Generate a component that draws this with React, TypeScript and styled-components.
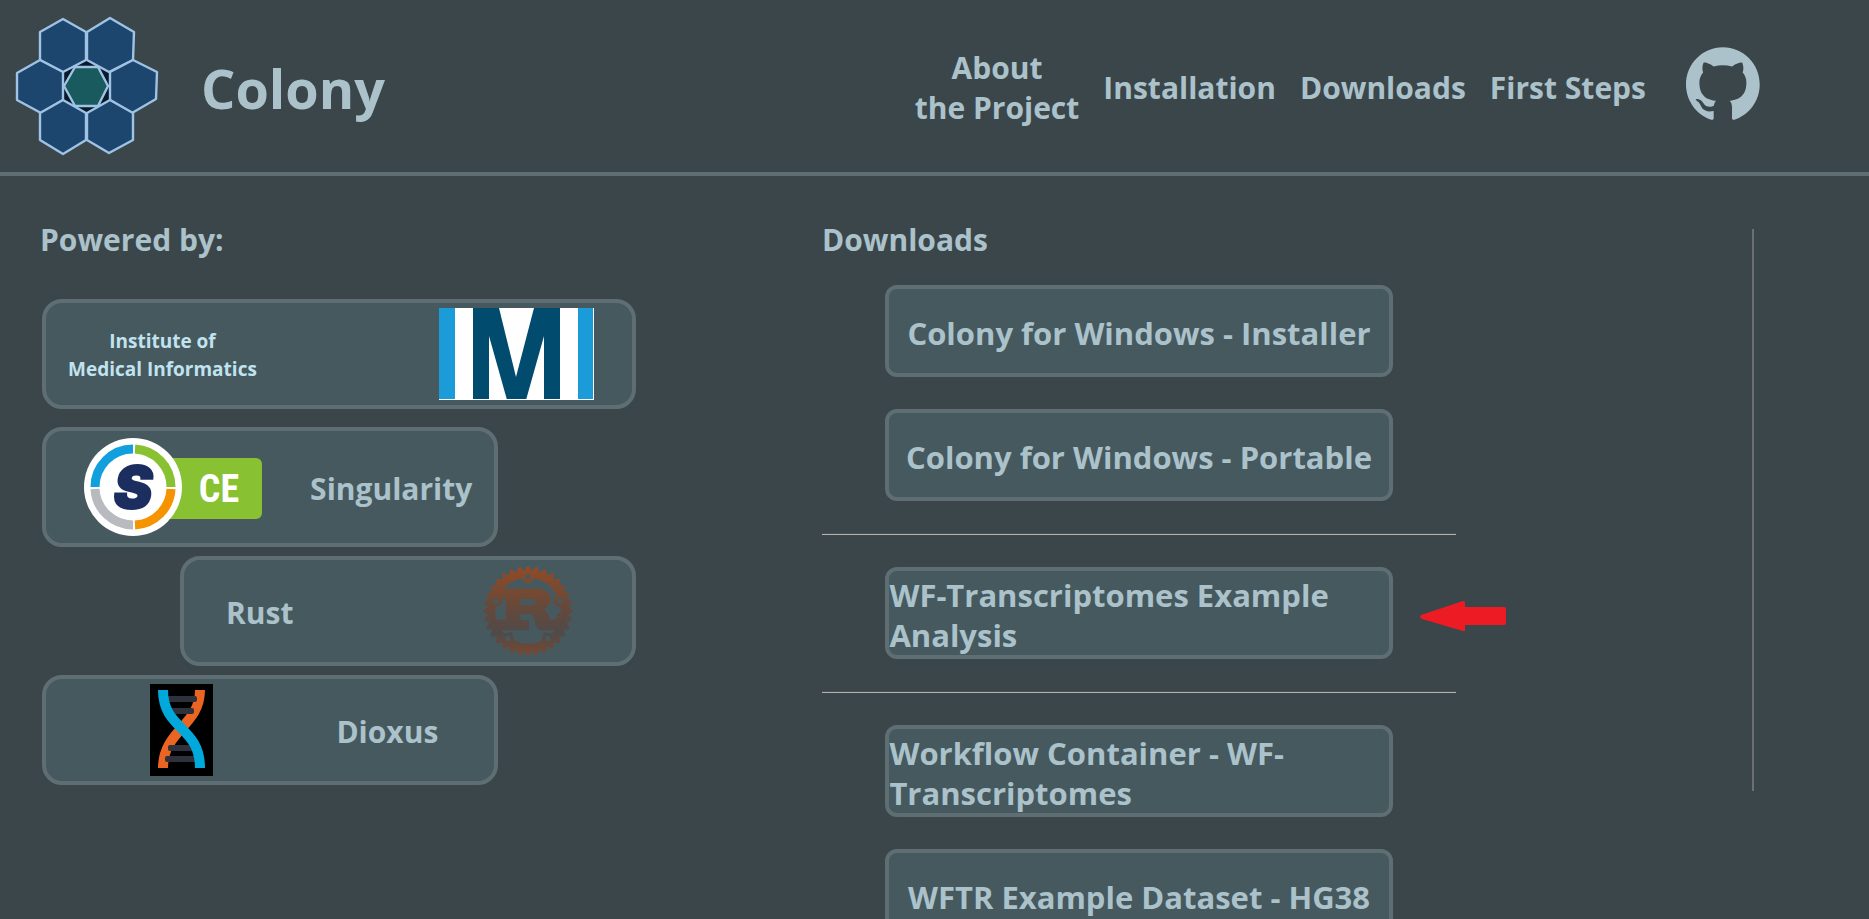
import React from "react";
import styled, { createGlobalStyle } from "styled-components";
import { SiRust } from "react-icons/si";

const GlobalStyle = createGlobalStyle`
  *, *::before, *::after { box-sizing: border-box; }
  html, body, #root { height: 100%; }
  body {
    margin: 0;
    overflow: hidden;
    background: #3b464a;
    color: #abc2cb;
    font-family: "Segoe UI", "Open Sans", "Noto Sans", sans-serif;
    font-size: 30px;
    font-weight: 700;
    line-height: 40px;
  }
`;

const Page = styled.div`
  display: flex;
  flex-direction: column;
  height: 100%;
  overflow: hidden;
`;

const Header = styled.header`
  display: flex;
  flex: none;
  align-items: center;
  padding: 14px 109px 16px 12px;
  border-bottom: 4px solid #5e6e73;
`;

const Brand = styled.h1`
  margin: 0 auto 0 39px;
  padding-top: 6px;
  font-size: 54px;
  line-height: 72px;
`;

const Nav = styled.nav`
  display: flex;
  align-items: center;
  gap: 24px;
  padding-top: 6px;
  text-align: center;
`;

const NavLink = styled.a`
  color: inherit;
  text-decoration: none;
`;

const GithubLink = styled.a`
  display: block;
  margin: 0 0 10px 16px;
  color: inherit;

  svg { display: block; }
`;

const Main = styled.main`
  display: grid;
  grid-template-columns: 822fr 634fr 298fr 115fr;
  flex: 1;
  min-height: 0;
  padding-top: 44px;
`;

const Sponsors = styled.section`
  padding-left: 40px;
`;

const Heading = styled.h2`
  margin: 0;
  font-size: inherit;
  line-height: 40px;
`;

const SponsorList = styled.div`
  display: flex;
  flex-direction: column;
  gap: 9px;
  width: 76%;
  margin: 39px 0 0 2px;
`;

type SponsorProps = { $side?: "start" | "end"; $tall?: boolean; $inset: string };

const SponsorCard = styled.a<SponsorProps>`
  display: flex;
  align-items: center;
  justify-content: space-between;
  align-self: ${(p) => (p.$side ? `flex-${p.$side}` : "stretch")};
  width: ${(p) => (p.$side ? "calc(100% - 138px)" : "auto")};
  height: ${(p) => (p.$tall ? 120 : 110)}px;
  margin-bottom: ${(p) => (p.$side ? 0 : 9)}px;
  padding: ${(p) => p.$inset};
  border: 4px solid #5e6e73;
  border-radius: 20px;
  background: #46595e;
  color: inherit;
  text-decoration: none;

  svg { display: block; flex: none; }
`;

const SponsorName = styled.span`
  padding-top: 4px;
`;

const Institute = styled.span`
  padding-top: 2px;
  color: #c0e3ef;
  font-size: 19px;
  line-height: 28px;
  text-align: center;
`;

const DownloadList = styled.div`
  display: flex;
  flex-direction: column;
  align-items: center;
  gap: 32px;
  margin-top: 25px;
`;

const DownloadRow = styled.div`
  position: relative;
  width: 80%;
`;

const DownloadButton = styled.button`
  display: flex;
  align-items: center;
  justify-content: center;
  width: 100%;
  height: 92px;
  padding: 4px 0 0;
  border: 4px solid #5e6e73;
  border-radius: 12px;
  background: #46595e;
  color: inherit;
  font: inherit;
  font-size: 31px;
  text-align: left;
`;

const Divider = styled.hr`
  width: 100%;
  height: 2px;
  margin: 0;
  border: 0;
  border-top: 1px solid #4a4e4f;
  border-bottom: 1px solid #b8b2ae;
`;

const Pointer = styled.svg`
  position: absolute;
  top: 34px;
  left: calc(100% + 27px);
`;

const SideRule = styled.div`
  height: 562px;
  margin-top: 9px;
  border-right: 2px solid #6c7073;
`;

const ColonyLogo = () => (
  <svg width="150" height="142" viewBox="12 14 150 142" role="img" aria-label="Colony logo">
    <path d="M63 71 86 59 110 71V101L86 113 63 101Z" fill="#0a1a2b" />
    <g fill="#1d466f" stroke="#9fc3e4" strokeWidth="2.4" strokeLinejoin="round">
      <path d="M63 19 86 32V60L63 72 40 60V32Z" />
      <path d="M110 18 134 32 133 60 109 72 87 60V32Z" />
      <path d="M40 60 63 72V100L41 113 17 100V73Z" />
      <path d="M133 60 157 72 156 99 132 113 110 100V72Z" />
      <path d="M63 100 86 113V140L63 154 40 140V113Z" />
      <path d="M110 100 133 113V140L109 153 87 140V113Z" />
      <path d="M75 67H98L108 86 98 106H75L64 86Z" fill="#185a5d" />
    </g>
  </svg>
);

const GithubMark = () => (
  <svg width="74" height="73" viewBox="0 0 98 96" fill="currentColor" aria-hidden="true">
    <path d="M48.854 0C21.839 0 0 22 0 49.217c0 21.756 13.993 40.172 33.405 46.69 2.427.49 3.316-1.059 3.316-2.362 0-1.141-.08-5.052-.08-9.127-13.59 2.934-16.42-5.867-16.42-5.867-2.184-5.704-5.42-7.17-5.42-7.17-4.448-3.015.324-3.015.324-3.015 4.934.326 7.523 5.052 7.523 5.052 4.367 7.496 11.404 5.378 14.235 4.074.404-3.178 1.699-5.378 3.074-6.6-10.839-1.141-22.243-5.378-22.243-24.283 0-5.378 1.94-9.778 5.014-13.2-.485-1.222-2.184-6.275.486-13.038 0 0 4.125-1.304 13.426 5.052a46.97 46.97 0 0 1 12.214-1.63c4.125 0 8.33.571 12.213 1.63 9.302-6.356 13.427-5.052 13.427-5.052 2.67 6.763.97 11.816.485 13.038 3.155 3.422 5.015 7.822 5.015 13.2 0 18.905-11.404 23.06-22.324 24.283 1.78 1.548 3.316 4.481 3.316 9.126 0 6.6-.08 11.897-.08 13.526 0 1.304.89 2.853 3.316 2.364 19.412-6.52 33.405-24.935 33.405-46.691C97.707 22 75.788 0 48.854 0z" />
  </svg>
);

const InstituteLogo = () => (
  <svg width="155" height="92" viewBox="0 0 155 92" role="img" aria-label="Institute logo">
    <rect width="155" height="92" fill="#fff" />
    <rect width="16" height="91" fill="#1b9bd8" />
    <rect x="139" width="15" height="91" fill="#1b9bd8" />
    <rect x="34" width="87" height="91" fill="#004b6e" />
    <g fill="#fff">
      <path d="M60 0H95L77 69Z" />
      <path d="M50 28 68 92H50Z" />
      <path d="M105 28V92H87Z" />
    </g>
  </svg>
);

const SingularityLogo = () => (
  <svg width="178" height="100" viewBox="0 0 178 100" role="img" aria-label="SingularityCE logo">
    <rect x="70" y="21" width="108" height="61" rx="6" fill="#88c232" />
    <circle cx="49" cy="50" r="49" fill="#fff" />
    <g fill="none" strokeWidth="9">
      <path d="M11 50A38 38 0 0 1 49 12" stroke="#119fdd" />
      <path d="M51 12A38 38 0 0 1 87 50" stroke="#88c232" />
      <path d="M87 52A38 38 0 0 1 51 88" stroke="#f59300" />
      <path d="M49 88A38 38 0 0 1 11 52" stroke="#b9babf" />
    </g>
    <text x="49" y="71" textAnchor="middle" fontFamily="Inter, 'Open Sans'" fontStyle="italic" fontWeight="900" fontSize="58" fill="#1b2e5f" stroke="#1b2e5f" strokeWidth="2">S</text>
    <text x="135" y="65" textAnchor="middle" fontFamily="'Liberation Sans Narrow', 'Roboto Condensed', 'Open Sans Condensed', Roboto" fontWeight="700" fontSize="38" fill="#fff">CE</text>
  </svg>
);

const RustLogo = () => (
  <>
    <svg width="0" height="0" aria-hidden="true">
      <linearGradient id="rust" x1="0" y1="0" x2="0" y2="1">
        <stop offset="0" stopColor="#934a25" />
        <stop offset="0.45" stopColor="#66493a" />
        <stop offset="0.75" stopColor="#504a48" />
        <stop offset="1" stopColor="#7c472f" />
      </linearGradient>
    </svg>
    <SiRust size={90} fill="url(#rust)" aria-hidden="true" />
  </>
);

const DioxusLogo = () => (
  <svg width="63" height="92" viewBox="0 0 63 92" role="img" aria-label="Dioxus logo">
    <rect width="63" height="92" fill="#000" />
    <path d="M50 6C50 42 13 46 13 84" fill="none" stroke="#ea6422" strokeWidth="10" />
    <g fill="#2d323d">
      <rect x="14" y="12" width="33" height="6" rx="2" />
      <rect x="20" y="24" width="24" height="6" rx="2" />
      <rect x="18" y="61" width="26" height="6" rx="2" />
      <rect x="15" y="72" width="33" height="6" rx="2" />
    </g>
    <path d="M13 6C13 46 50 42 50 84" fill="none" stroke="#00a9dc" strokeWidth="10" />
  </svg>
);

const Download = ({ label, marked }: { label: string; marked?: boolean }) => (
  <DownloadRow>
    <DownloadButton type="button">{label}</DownloadButton>
    {marked && (
      <Pointer width="86" height="30" viewBox="0 0 86 30" fill="#ed1c24" aria-hidden="true">
        <path d="M1 14 43 0Q45 0 45 2V6H84Q86 6 86 8V22Q86 24 84 24H45V30H43L2 18Q-1 16 1 14Z" />
      </Pointer>
    )}
  </DownloadRow>
);

export default function App() {
  return (
    <Page>
      <GlobalStyle />
      <Header>
        <ColonyLogo />
        <Brand>Colony</Brand>
        <Nav>
          <NavLink href="#about">About<br />the Project</NavLink>
          <NavLink href="#installation">Installation</NavLink>
          <NavLink href="#downloads">Downloads</NavLink>
          <NavLink href="#first-steps">First Steps</NavLink>
          <GithubLink href="#github" aria-label="GitHub"><GithubMark /></GithubLink>
        </Nav>
      </Header>
      <Main>
        <Sponsors>
          <Heading>Powered by:</Heading>
          <SponsorList>
            <SponsorCard href="#institute" $inset="0 38px 0 22px">
              <Institute>Institute of<br />Medical Informatics</Institute>
              <InstituteLogo />
            </SponsorCard>
            <SponsorCard href="#singularity" $side="start" $tall $inset="0 22px 0 38px">
              <SingularityLogo />
              <SponsorName>Singularity</SponsorName>
            </SponsorCard>
            <SponsorCard href="#rust" $side="end" $inset="0 59px 0 42px">
              <SponsorName>Rust</SponsorName>
              <RustLogo />
            </SponsorCard>
            <SponsorCard href="#dioxus" $side="start" $inset="0 56px 0 104px">
              <DioxusLogo />
              <SponsorName>Dioxus</SponsorName>
            </SponsorCard>
          </SponsorList>
        </Sponsors>
        <section>
          <Heading>Downloads</Heading>
          <DownloadList>
            <Download label="Colony for Windows - Installer" />
            <Download label="Colony for Windows - Portable" />
            <Divider />
            <Download label="WF-Transcriptomes Example Analysis" marked />
            <Divider />
            <Download label="Workflow Container - WF-Transcriptomes" />
            <Download label="WFTR Example Dataset - HG38" />
          </DownloadList>
        </section>
        <SideRule />
      </Main>
    </Page>
  );
}
